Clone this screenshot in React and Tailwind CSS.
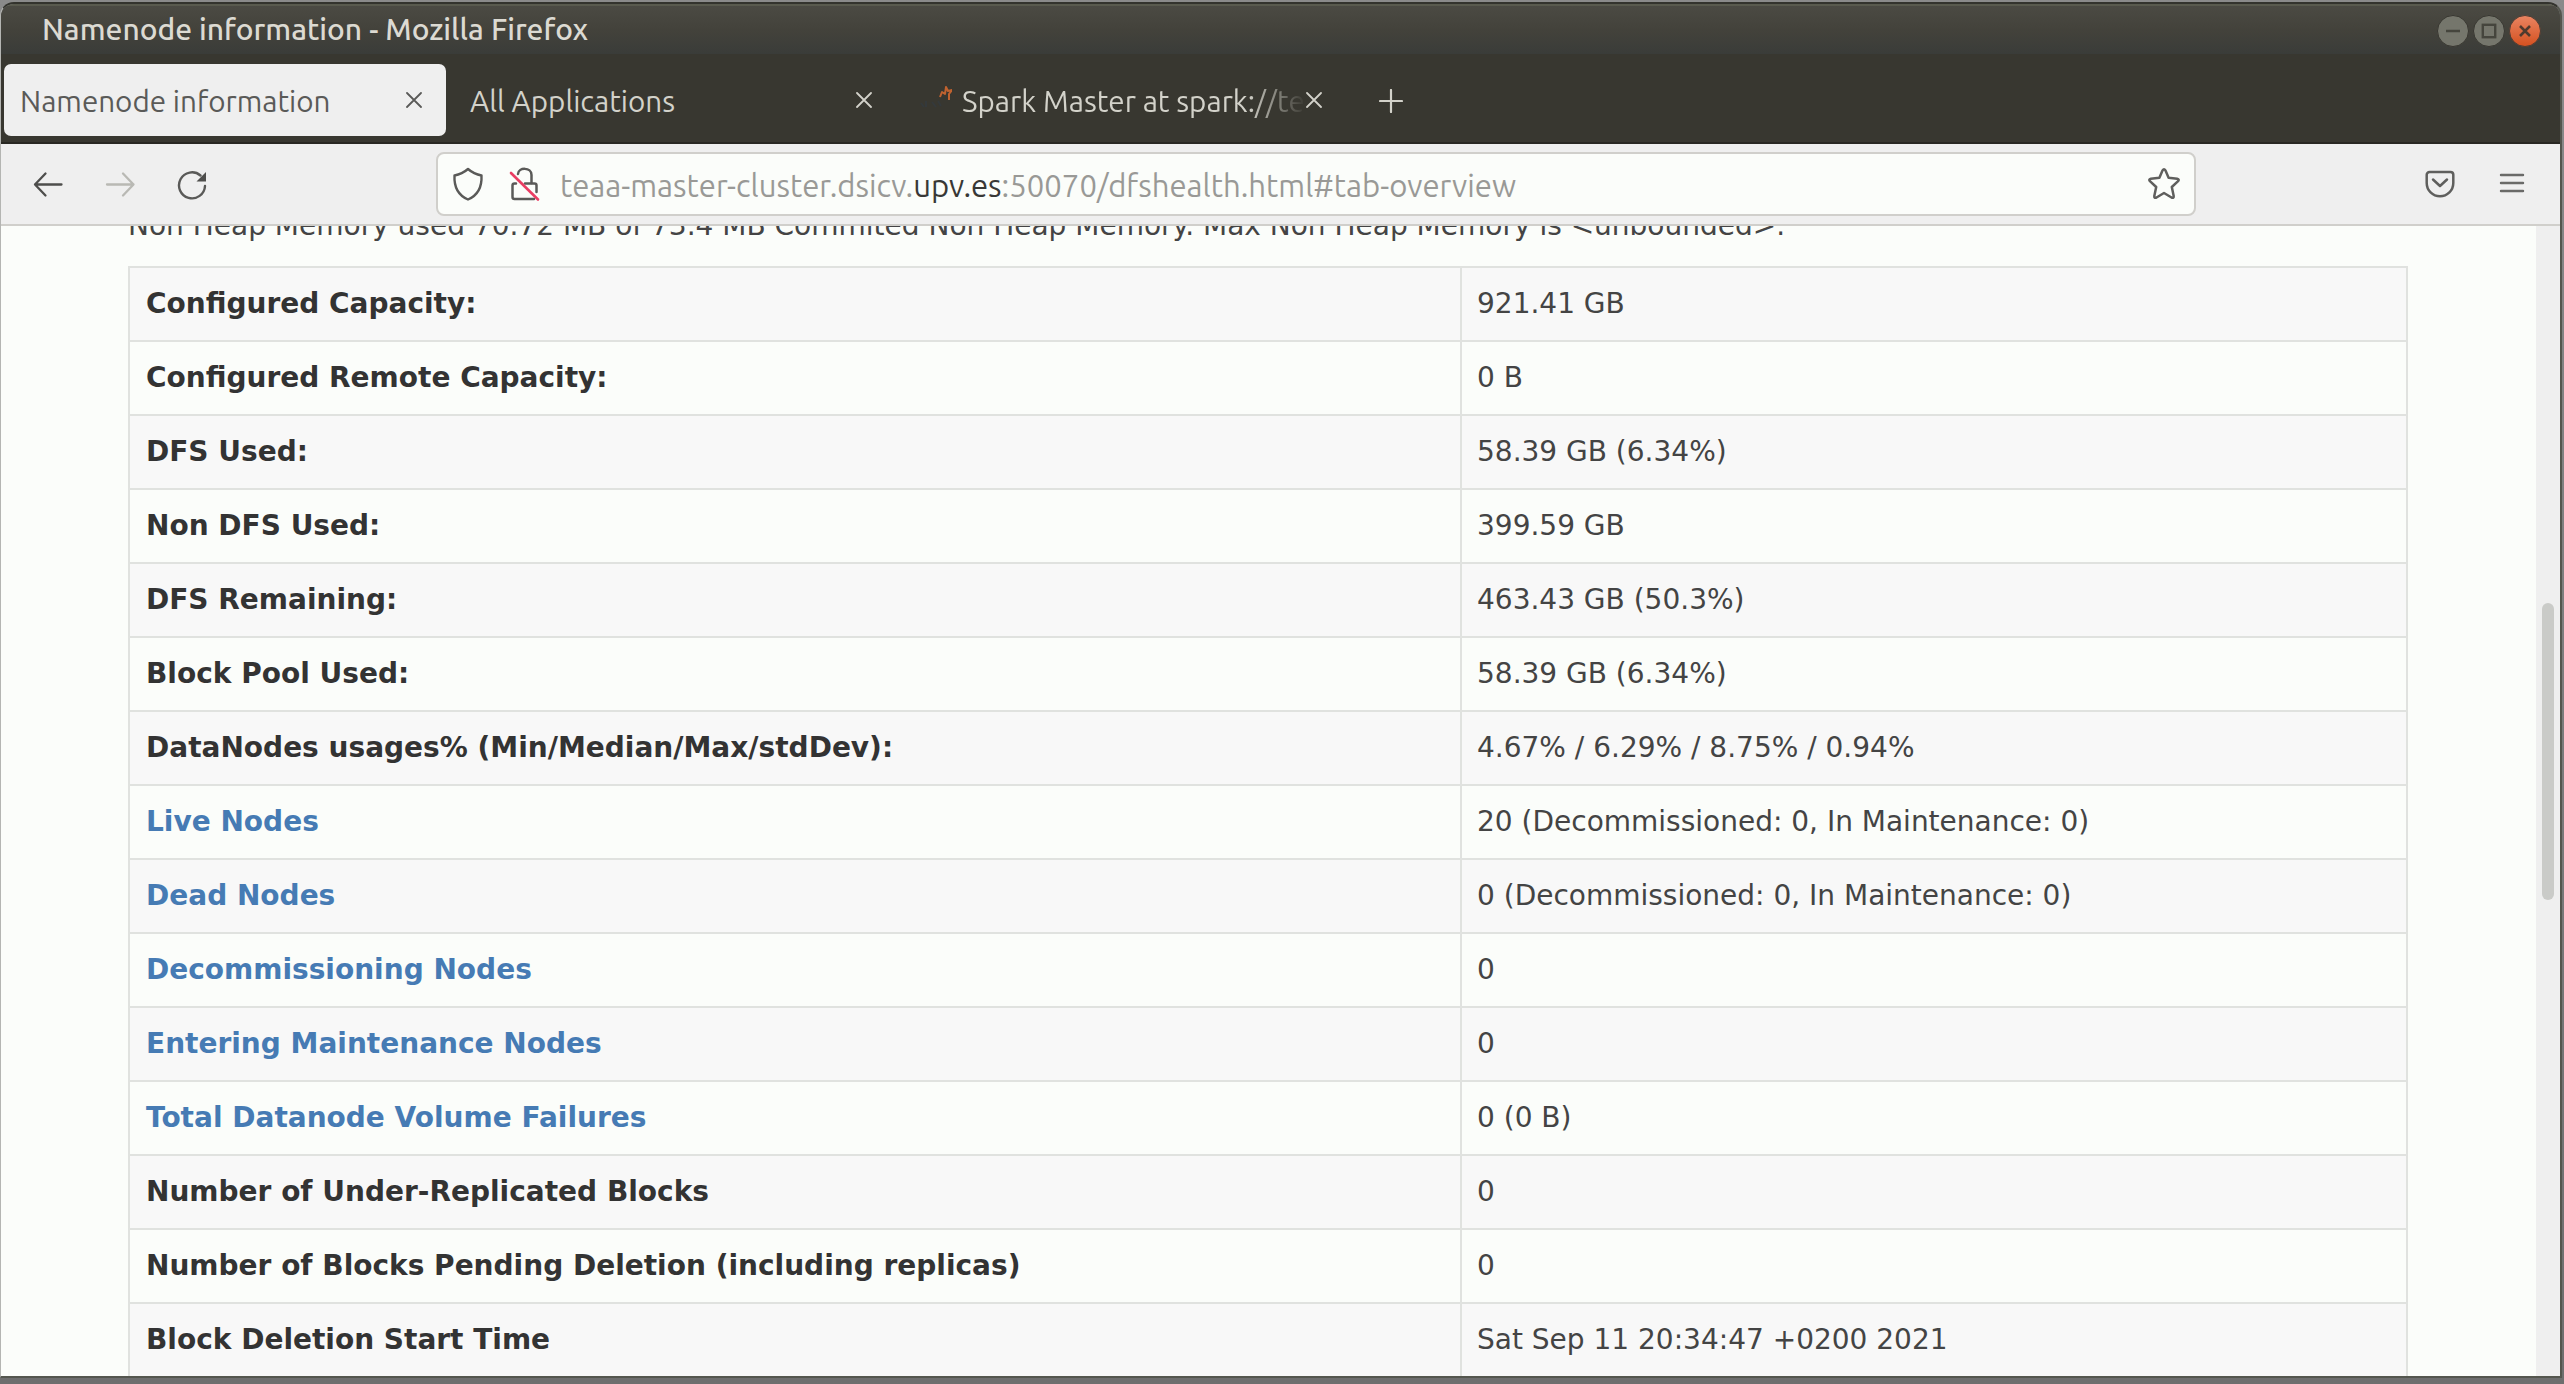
import React from "react";

const rows = [
  ["Configured Capacity:", "921.41 GB"],
  ["Configured Remote Capacity:", "0 B"],
  ["DFS Used:", "58.39 GB (6.34%)"],
  ["Non DFS Used:", "399.59 GB"],
  ["DFS Remaining:", "463.43 GB (50.3%)"],
  ["Block Pool Used:", "58.39 GB (6.34%)"],
  ["DataNodes usages% (Min/Median/Max/stdDev):", "4.67% / 6.29% / 8.75% / 0.94%"],
  ["Live Nodes", "20 (Decommissioned: 0, In Maintenance: 0)", true],
  ["Dead Nodes", "0 (Decommissioned: 0, In Maintenance: 0)", true],
  ["Decommissioning Nodes", "0", true],
  ["Entering Maintenance Nodes", "0", true],
  ["Total Datanode Volume Failures", "0 (0 B)", true],
  ["Number of Under-Replicated Blocks", "0"],
  ["Number of Blocks Pending Deletion (including replicas)", "0"],
  ["Block Deletion Start Time", "Sat Sep 11 20:34:47 +0200 2021"],
];

function CloseX({ className }) {
  return (
    <svg className={"h-4 w-4 shrink-0 " + className} viewBox="0 0 16 16" fill="none" stroke="currentColor" strokeWidth="1.8" strokeLinecap="round">
      <path d="M1 1l14 14M15 1L1 15" />
    </svg>
  );
}

function TitleBar() {
  return (
    <div className="flex h-[50px] shrink-0 items-center border-t-2 border-[#595a4e] bg-linear-to-b from-[#4b4a43] via-[#43423b] to-[#3a3c39] pr-[19px] pl-[41px]">
      <div className="-mt-[2px] flex-1 text-[30px] leading-none font-medium text-[#dcdad2]">
        Namenode information - Mozilla Firefox
      </div>
      <div className="mt-[2px] flex gap-1">
        <svg className="h-8 w-8" viewBox="0 0 32 32">
          <circle cx="16" cy="16" r="15.5" fill="#75766c" stroke="#383731" />
          <path d="M9 16h14" stroke="#45453d" strokeWidth="2.4" />
        </svg>
        <svg className="h-8 w-8" viewBox="0 0 32 32">
          <circle cx="16" cy="16" r="15.5" fill="#75766c" stroke="#383731" />
          <rect x="9.8" y="9.8" width="12.4" height="12.4" fill="none" stroke="#45453d" strokeWidth="2.4" />
        </svg>
        <svg className="h-8 w-8" viewBox="0 0 32 32">
          <defs>
            <linearGradient id="closeFill" x1="0" y1="0" x2="0" y2="1">
              <stop offset="0" stopColor="#ea8562" />
              <stop offset="1" stopColor="#d4501f" />
            </linearGradient>
          </defs>
          <circle cx="16" cy="16" r="15.5" fill="url(#closeFill)" stroke="#4a3d35" />
          <path d="M11 11l10 10M21 11L11 21" stroke="#4f3a2e" strokeWidth="2.6" />
        </svg>
      </div>
    </div>
  );
}

function TabStrip() {
  return (
    <div className="flex h-[90px] shrink-0 items-center border-b-2 border-[#292823] bg-[#383730] pt-1 pl-[3px] text-[29.6px] leading-none text-[#d3d2ca]">
      <div className="flex h-[72px] w-[442px] shrink-0 items-center justify-between rounded-[7px] bg-[#efefef] pr-6 pl-4 text-[#5a5a58]">
        <span className="mt-[3px]">Namenode information</span>
        <CloseX className="text-[#5a5a58]" />
      </div>
      <div className="flex w-[450px] shrink-0 items-center justify-between pr-6 pl-6">
        <span className="mt-[3px]">All Applications</span>
        <CloseX className="text-[#d3d2ca]" />
      </div>
      <div className="flex w-[450px] shrink-0 items-center pr-6 pl-[24px]">
        <svg className="h-8 w-8 shrink-0" viewBox="0 0 32 32" fill="none">
          <path d="M1 19l3 4M6 17v6M12 18l4 5M18 17l3 5" stroke="#34393b" strokeWidth="2" />
          <path d="M20 13l2-5 3 2 1-7 2 4 4-1-3 4v6" stroke="#c0622f" strokeWidth="2" strokeLinejoin="round" />
        </svg>
        <span className="mt-[3px] ml-[10px] flex-1 overflow-hidden py-1 whitespace-nowrap [mask-image:linear-gradient(to_right,#000_285px,transparent_344px)]">
          Spark Master at spark://te
        </span>
        <CloseX className="text-[#d3d2ca]" />
      </div>
      <svg className="mt-[2px] ml-[33px] h-6 w-6 shrink-0" viewBox="0 0 24 24" stroke="#d3d2ca" strokeWidth="2.2" strokeLinecap="round">
        <path d="M12 1v22M1 12h22" />
      </svg>
    </div>
  );
}

function Toolbar() {
  return (
    <div className="flex h-[82px] shrink-0 items-center border-b-2 border-[#d0cfcb] bg-[#efefef] pb-px pl-[31px] text-[#5a5a58]">
      <svg className="h-8 w-8" viewBox="0 0 32 32" fill="none" stroke="#4e4e4c" strokeWidth="2.3" strokeLinecap="round" strokeLinejoin="round">
        <path d="M29.500 16.500H3M13.500 5.500L3 16.500l10.500 11" />
      </svg>
      <svg className="ml-[40px] h-8 w-8" viewBox="0 0 32 32" fill="none" stroke="#b9b9b4" strokeWidth="2.3" strokeLinecap="round" strokeLinejoin="round">
        <path d="M3 16.500h26.500M19 5.500l10.500 11L19 27.500" />
      </svg>
      <svg className="ml-[40px] h-8 w-8" viewBox="0 0 32 32" fill="none" stroke="#5a5a58" strokeWidth="2.4" strokeLinecap="round">
        <path d="M29 18A13 13 0 1 1 24.500 7.500" />
        <path d="M30 4v9.500h-9.500z" fill="#4e4e4c" stroke="none" />
      </svg>
      <div className="ml-[228px] flex h-16 w-[1760px] items-center rounded-[8px] border-2 border-[#d0cfcb] bg-[#fbfdfa] pr-[13px] pl-[14px]">
        <svg className="h-9 w-8 shrink-0" viewBox="0 0 32 36" fill="none" stroke="#5a5a58" strokeWidth="2.4" strokeLinejoin="round">
          <path d="M16 3C12 6.500 8 8.500 2.500 9.500C2 20 5.500 29 16 33.500C26.500 29 30 20 29.500 9.500C24 8.500 20 6.500 16 3z" />
        </svg>
        <svg className="ml-[24px] h-9 w-8 shrink-0" viewBox="0 0 32 36" fill="none" stroke="#5a5a58" strokeWidth="2.5" strokeLinejoin="round" strokeLinecap="round">
          <path d="M10 8C10.500 1 23.500 1 23.500 9v8" />
          <path d="M8 17.500H6.500a2 2 0 0 0-2 2V31a2 2 0 0 0 2 2H26M17 17.500h9.500a2 2 0 0 1 2 2V26" />
          <path d="M3 7L30 33.500" stroke="#ea3d62" strokeWidth="2.6" />
        </svg>
        <div className="mt-[4px] ml-[20px] flex-1 text-[31.1px] leading-none whitespace-nowrap text-[#999996]">
          teaa-master-cluster.dsicv.<span className="text-[#383836]">upv.es</span>:50070/dfshealth.html#tab-overview
        </div>
        <svg className="h-[34px] w-[34px] shrink-0" viewBox="0 0 34 34" fill="none" stroke="#5f5f5d" strokeWidth="2.5" strokeLinejoin="round">
          <path d="M15.600 3.300q1.400-2.300 2.800 0l3.200 7.500 8.600.9q2.500.6.900 2.500l-6.300 5.800 1.900 9q.2 2.500-2.200 1.500L17 26l-7.500 4.500q-2.400 1-2.200-1.500l1.900-9-6.300-5.800q-1.600-1.900.9-2.500l8.600-.9z" />
        </svg>
      </div>
      <svg className="ml-[228px] h-8 w-8" viewBox="0 0 32 32" fill="none" stroke="#5f5f5d" strokeWidth="2.5" strokeLinecap="round" strokeLinejoin="round">
        <path d="M5.500 4h21a2.800 2.800 0 0 1 2.800 2.800V15a13.300 13.300 0 0 1-26.600 0V6.800A2.800 2.800 0 0 1 5.500 4z" />
        <path d="M9 11.500l7 6.500 7-6.500" />
      </svg>
      <svg className="ml-[40px] h-8 w-8" viewBox="0 0 32 32" stroke="#6a6a68" strokeWidth="2.4" strokeLinecap="round">
        <path d="M5 7h22M5 15h22M5 23h22" />
      </svg>
    </div>
  );
}

function OverviewPage() {
  return (
    <div className="flex min-h-0 flex-1 overflow-hidden bg-[#fbfdfa] font-['DejaVu_Sans',sans-serif] text-[28px] leading-[40px] text-[#444444]">
      <div className="min-w-0 flex-1 pl-[127px]">
        <p className="-mt-5 mb-5 whitespace-nowrap">
          Non Heap Memory used 70.72 MB of 73.4 MB Commited Non Heap Memory. Max Non Heap Memory is &lt;unbounded&gt;.
        </p>
        <div className="w-[2280px] border-2 border-b-0 border-[#e0e2df]">
          {rows.map(([label, value, link], i) => (
            <div key={label} className={"grid h-[74px] grid-cols-[1332px_1fr] border-b-2 border-[#e0e2df] " + (i % 2 ? "" : "bg-[#f8f8f8]")}>
              <div className={"border-r-2 border-[#e0e2df] p-4 font-bold " + (link ? "text-[#467bb4]" : "text-[#333333]")}>{label}</div>
              <div className="py-4 pl-[15px]">{value}</div>
            </div>
          ))}
        </div>
      </div>
      <div className="w-6 shrink-0 bg-[#efefef] pt-[377px] pl-[6px]">
        <div className="h-[297px] w-3 rounded-full bg-[#cacbc8]" />
      </div>
    </div>
  );
}

export default function App() {
  return (
    <div className="h-[1384px] w-[2564px] overflow-hidden bg-linear-to-b from-[#8a8a8a] to-[#6e6e6e] pt-[2px] font-[Ubuntu,'Noto_Sans',sans-serif]">
      <div className="flex h-[1376px] w-[2562px] flex-col overflow-hidden rounded-t-[14px] border-t-2 border-r-2 border-b-2 border-l border-t-[#33332d] border-r-[#54564e] border-b-[#54564e] border-l-[#b4b5b2]">
        <TitleBar />
        <TabStrip />
        <Toolbar />
        <OverviewPage />
      </div>
    </div>
  );
}
